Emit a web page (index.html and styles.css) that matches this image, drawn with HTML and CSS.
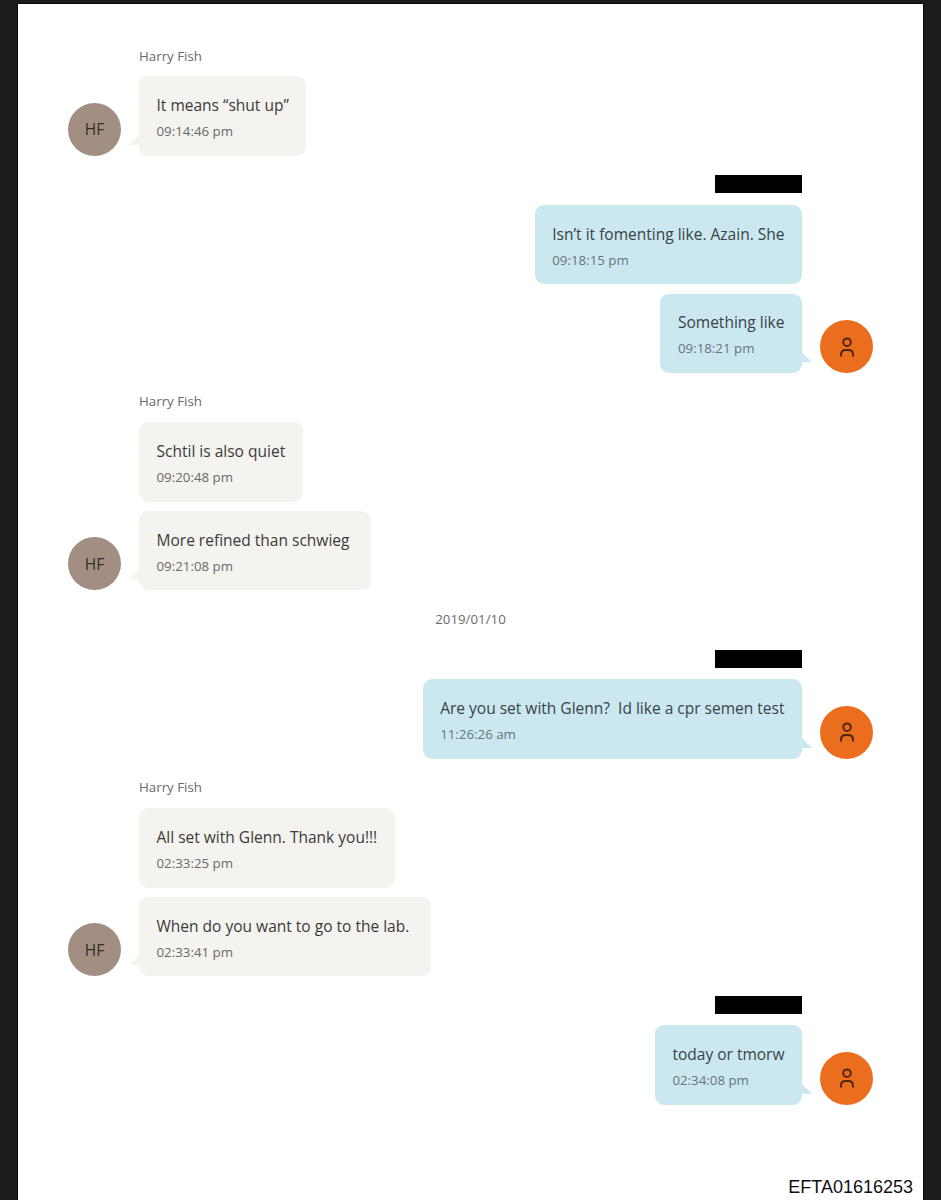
FILE: index.html
```
<!DOCTYPE html>
<html lang="en">
<head>
    <meta charset="UTF-8">
    <meta name="viewport" content="width=device-width, initial-scale=1.0">
    <title>Conversation</title>
    <link rel="stylesheet" href="styles.css">
</head>
<body>
    <!-- Shared user icon -->
    <svg class="sprite" width="0" height="0">
        <symbol id="icon-user" viewBox="0 0 16 20">
            <circle cx="8" cy="5.2" r="3.8"/>
            <path d="M2 19.4v-1.6c0-3 1.8-4.9 4.6-4.9h2.8c2.8 0 4.6 1.9 4.6 4.9v1.6"/>
        </symbol>
    </svg>

    <div class="page">
        <div class="chat">
            <div class="group received">
                <div class="sender">Harry Fish</div>
                <div class="message">
                    <div class="avatar">HF</div>
                    <div class="bubble tail">
                        <p class="text">It means “shut up”</p>
                        <p class="time">09:14:46 pm</p>
                    </div>
                </div>
            </div>

            <div class="group sent">
                <div class="sender"><span class="redacted"></span></div>
                <div class="message">
                    <div class="bubble">
                        <p class="text">Isn’t it fomenting like. Azain. She</p>
                        <p class="time">09:18:15 pm</p>
                    </div>
                </div>
                <div class="message">
                    <div class="bubble tail">
                        <p class="text">Something like</p>
                        <p class="time">09:18:21 pm</p>
                    </div>
                    <div class="avatar"><svg class="icon"><use href="#icon-user"/></svg></div>
                </div>
            </div>

            <div class="group received">
                <div class="sender">Harry Fish</div>
                <div class="message">
                    <div class="bubble">
                        <p class="text">Schtil is also quiet</p>
                        <p class="time">09:20:48 pm</p>
                    </div>
                </div>
                <div class="message">
                    <div class="avatar">HF</div>
                    <div class="bubble tail trailing">
                        <p class="text">More refined than schwieg</p>
                        <p class="time">09:21:08 pm</p>
                    </div>
                </div>
            </div>

            <div class="date">2019/01/10</div>

            <div class="group sent">
                <div class="sender"><span class="redacted"></span></div>
                <div class="message">
                    <div class="bubble tail">
                        <p class="text">Are you set with Glenn?  Id like a cpr semen test</p>
                        <p class="time">11:26:26 am</p>
                    </div>
                    <div class="avatar"><svg class="icon"><use href="#icon-user"/></svg></div>
                </div>
            </div>

            <div class="group received">
                <div class="sender">Harry Fish</div>
                <div class="message">
                    <div class="bubble">
                        <p class="text">All set with Glenn. Thank you!!!</p>
                        <p class="time">02:33:25 pm</p>
                    </div>
                </div>
                <div class="message">
                    <div class="avatar">HF</div>
                    <div class="bubble tail trailing">
                        <p class="text">When do you want to go to the lab.</p>
                        <p class="time">02:33:41 pm</p>
                    </div>
                </div>
            </div>

            <div class="group sent">
                <div class="sender"><span class="redacted"></span></div>
                <div class="message">
                    <div class="bubble tail">
                        <p class="text">today or tmorw</p>
                        <p class="time">02:34:08 pm</p>
                    </div>
                    <div class="avatar"><svg class="icon"><use href="#icon-user"/></svg></div>
                </div>
            </div>
        </div>

        <div class="doc-number">EFTA01616253</div>
    </div>
</body>
</html>
```
FILE: styles.css
```
* {
    box-sizing: border-box;
}
body {
    font-family: "Open Sans", "Noto Sans", sans-serif;
    background-color: #1c1c1e;
    margin: 0;
    padding: 4px 18px 0;
    height: 1200px;
    overflow: hidden;
}
.sprite {
    position: absolute;
}
.page {
    display: flex;
    flex-direction: column;
    width: 905px;
    height: 1196px;
    background: #fff;
    box-shadow: 0 0 0 1px #0b0b0c;
}
.chat {
    padding: 23.3px 50px 0;
}
.group {
    display: flex;
    flex-direction: column;
    gap: 9.2px;
}
.sender {
    height: 39.9px;
    padding-top: 18.3px;
    line-height: 20px;
    font-size: 13.3px;
    color: #6b6967;
}
.received .sender {
    margin-left: 71px;
}
.sent .sender {
    margin-right: 71px;
}
.redacted {
    display: block;
    width: 87px;
    height: 18px;
    margin-top: 1px;
    background: #000;
}
.message {
    display: flex;
    align-items: flex-end;
    gap: 18px;
}
.sent .sender,
.sent .message {
    display: flex;
    justify-content: flex-end;
}
/* messages without an avatar keep its column free */
.received .bubble:first-child {
    margin-left: 71px;
}
.sent .bubble:last-child {
    margin-right: 71px;
}
.bubble {
    position: relative;
    height: 79.5px;
    padding: 16.8px 17.5px;
    border-radius: 9px;
    background: #f4f3f0;
}
.sent .bubble {
    background: #cbe8f0;
}
.bubble.trailing {
    padding-right: 21.5px;
}
.tail::after {
    content: "";
    position: absolute;
    bottom: 11px;
    left: -10px;
    width: 11px;
    height: 11px;
    background: inherit;
    clip-path: polygon(100% 0, 100% 100%, 0 100%);
}
.sent .tail::after {
    left: auto;
    right: -10px;
    clip-path: polygon(0 0, 100% 100%, 0 100%);
}
.text,
.time {
    margin: 0;
    white-space: pre;
}
.text {
    line-height: 24px;
    font-size: 15.53px;
    color: #3a3a39;
}
.time {
    margin-top: 4px;
    line-height: 20px;
    font-size: 13.3px;
    color: #6b6967;
}
.sent .text {
    color: #374347;
}
.sent .time {
    color: #66757a;
}
.avatar {
    display: flex;
    align-items: center;
    justify-content: center;
    width: 53px;
    height: 53px;
    border-radius: 50%;
    background: #a38f82;
    font-size: 15.5px;
    color: #332d29;
}
.sent .avatar {
    background: #eb6e1f;
}
.icon {
    width: 16px;
    height: 20px;
    fill: none;
    stroke: #4f260c;
    stroke-width: 2;
}
.date {
    height: 40px;
    padding-top: 18.5px;
    line-height: 20px;
    font-size: 13.3px;
    text-align: center;
    color: #6b6967;
}
.doc-number {
    margin-top: auto;
    padding: 0 10px 3px;
    font-family: "Liberation Sans", Arial, sans-serif;
    font-size: 18px;
    line-height: 20px;
    text-align: right;
    color: #111;
}
```
